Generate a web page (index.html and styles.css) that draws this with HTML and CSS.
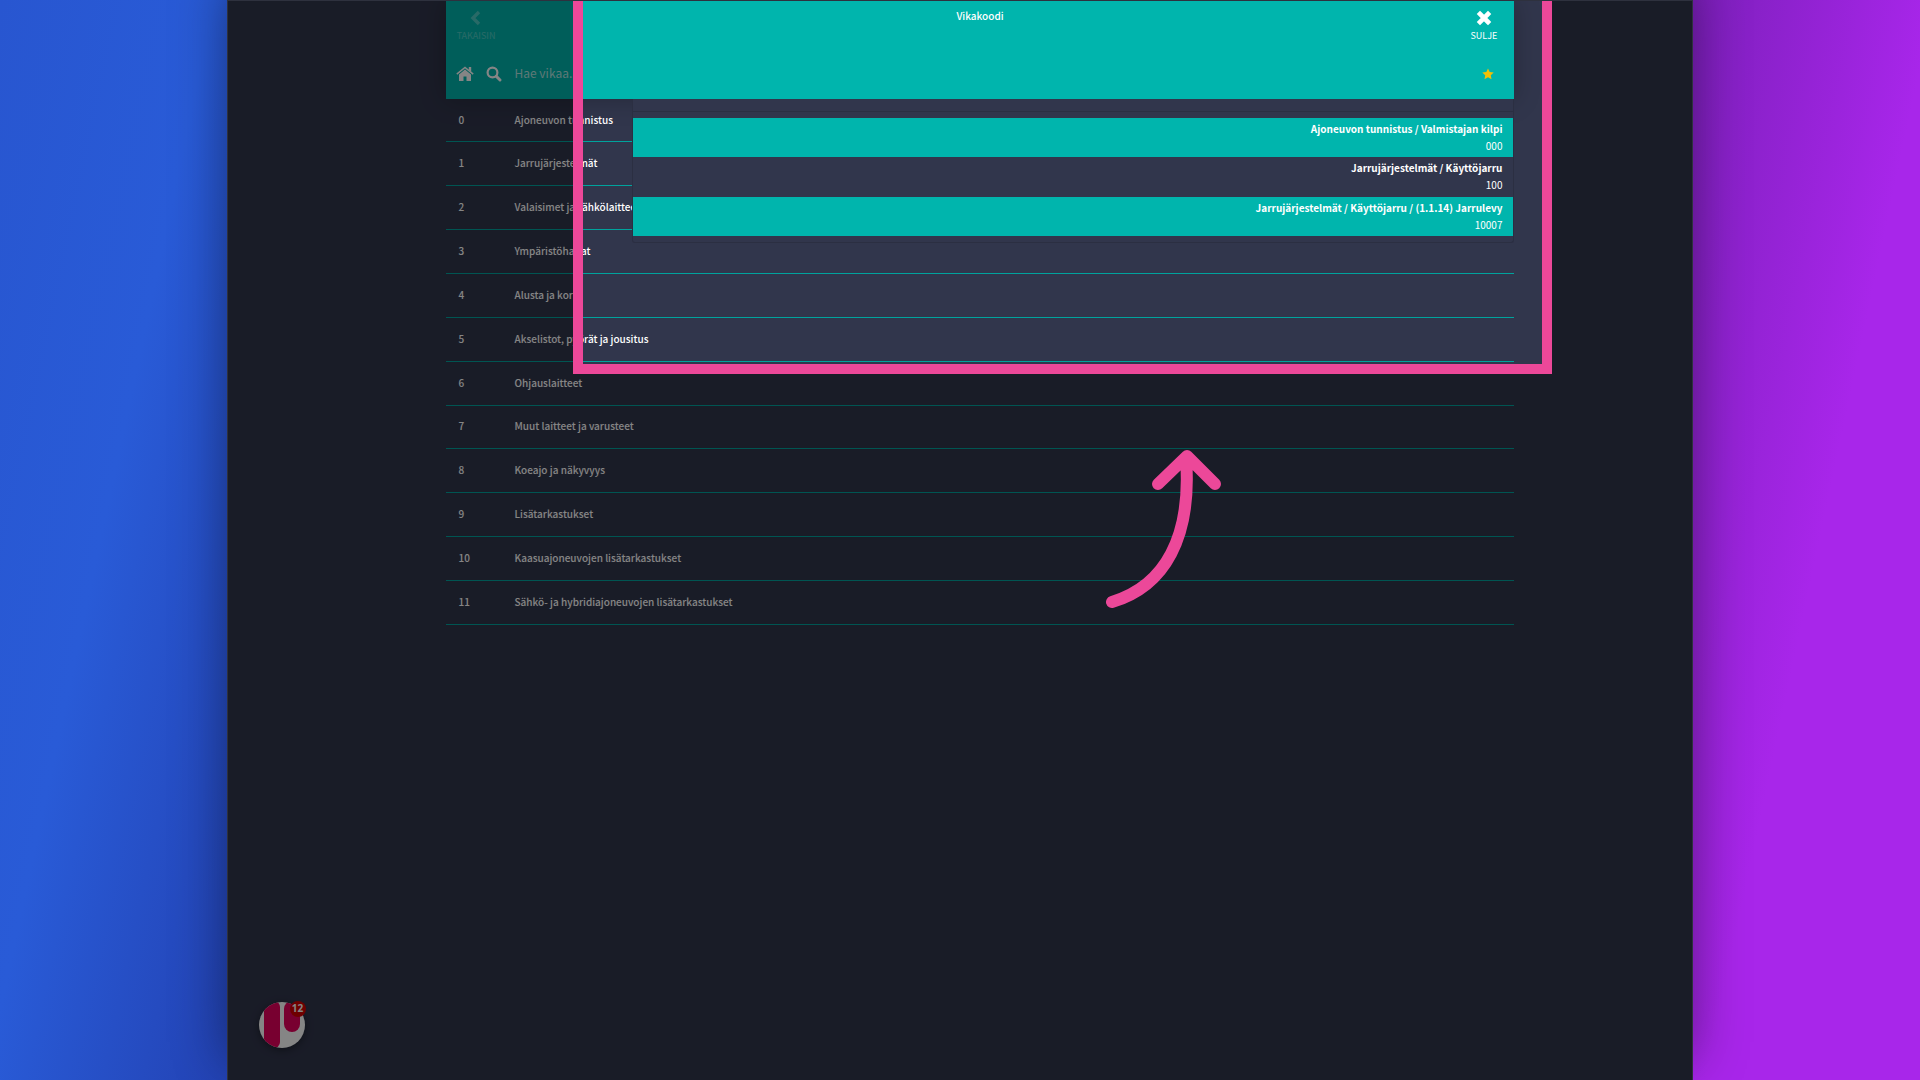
FILE: index.html
```html
<!DOCTYPE html>
<html lang="fi">
<head>
<meta charset="utf-8">
<meta name="viewport" content="width=device-width, initial-scale=1">
<title>Vikakoodi</title>
<link rel="stylesheet" href="styles.css">
</head>
<body>
<main class="window">
  <section class="panel">
    <header class="header">
      <div class="titlebar">
        <button class="nav-button back" type="button" disabled>
          <svg class="nav-icon" viewBox="0 0 16 16" aria-hidden="true"><path d="M11 2L5 8l6 6" fill="none" stroke="currentColor" stroke-width="3.4"/></svg>
          <span>TAKAISIN</span>
        </button>
        <h1 class="title">Vikakoodi</h1>
        <button class="nav-button close" type="button">
          <svg class="nav-icon" viewBox="0 0 16 16" aria-hidden="true"><path d="M4 4l8 8M12 4l-8 8" fill="none" stroke="currentColor" stroke-width="4.6" stroke-linecap="square" stroke-linejoin="round"/></svg>
          <span>SULJE</span>
        </button>
      </div>
      <div class="searchbar">
        <button class="icon-button" type="button" aria-label="Koti">
          <svg class="home-icon" viewBox="0 0 18 16" aria-hidden="true"><path d="M9 3.6l6 5V15h-4.500v-4.500h-3V15H3V8.600z" fill="currentColor"/><path d="M.8 8.200L9 1.400l8.200 6.800" fill="none" stroke="currentColor" stroke-width="1.500"/><path d="M12.800 1h2.400v5l-2.400-2z" fill="currentColor"/></svg>
        </button>
        <label class="search-label" for="search" aria-label="Hae">
          <svg class="search-icon" viewBox="0 0 16 16" aria-hidden="true"><circle cx="6.500" cy="6.500" r="4.900" fill="none" stroke="currentColor" stroke-width="2.200"/><path d="M10.400 10.400l3.600 3.600" stroke="currentColor" stroke-width="2.900" stroke-linecap="round"/></svg>
        </label>
        <input class="search-input" id="search" type="text" placeholder="Hae vikaa...">
        <button class="icon-button star" type="button" aria-label="Suosikit">
          <svg class="star-icon" viewBox="0 0 12 12" aria-hidden="true"><path d="M6 .4l1.700 3.600 4 .5-2.900 2.700.7 4L6 9.300l-3.500 1.900.7-4L.3 4.500l4-.5z" fill="currentColor"/></svg>
        </button>
      </div>
    </header>
    <table class="codes">
      <tbody>
        <tr><td class="code">0</td><td>Ajoneuvon tunnistus</td></tr>
        <tr><td class="code">1</td><td>Jarrujärjestelmät</td></tr>
        <tr><td class="code">2</td><td>Valaisimet ja sähkölaitteet</td></tr>
        <tr><td class="code">3</td><td>Ympäristöhaitat</td></tr>
        <tr><td class="code">4</td><td>Alusta ja kori</td></tr>
        <tr><td class="code">5</td><td>Akselistot, pyörät ja jousitus</td></tr>
        <tr><td class="code">6</td><td>Ohjauslaitteet</td></tr>
        <tr><td class="code">7</td><td>Muut laitteet ja varusteet</td></tr>
        <tr><td class="code">8</td><td>Koeajo ja näkyvyys</td></tr>
        <tr><td class="code">9</td><td>Lisätarkastukset</td></tr>
        <tr><td class="code">10</td><td>Kaasuajoneuvojen lisätarkastukset</td></tr>
        <tr><td class="code">11</td><td>Sähkö- ja hybridiajoneuvojen lisätarkastukset</td></tr>
      </tbody>
    </table>
    <ul class="favorites">
      <li class="favorite marked"><strong>Ajoneuvon tunnistus / Valmistajan kilpi</strong><span>000</span></li>
      <li class="favorite"><strong>Jarrujärjestelmät / Käyttöjarru</strong><span>100</span></li>
      <li class="favorite marked"><strong>Jarrujärjestelmät / Käyttöjarru / (1.1.14) Jarrulevy</strong><span>10007</span></li>
    </ul>
  </section>
  <button class="chat" type="button" aria-label="Viestit">
    <svg class="chat-logo" viewBox="0 0 46 46" aria-hidden="true">
      <clipPath id="disc"><circle cx="23" cy="23" r="23"/></clipPath>
      <g clip-path="url(#disc)"><path fill="#fff" d="M0 0h46v46H0z"/><rect x="5" y="-1" width="16" height="47" rx="6" fill="#e6005c"/><rect x="25" y="-1" width="16" height="31" rx="8" fill="#e6005c"/></g>
    </svg>
    <span class="badge">12</span>
  </button>
  <div class="spotlight"></div>
  <svg class="arrow" viewBox="0 0 104 160" aria-hidden="true"><path d="M7 153C60 137 87 88 81 9M53 35L82 7l28 28" fill="none" stroke="#ec4899" stroke-width="12" stroke-linecap="round" stroke-linejoin="round"/></svg>
</main>
</body>
</html>
```
FILE: styles.css
```css
* { box-sizing: border-box; }

html { overflow-x: clip; }

body {
  margin: 0;
  min-height: 100vh;
  background: linear-gradient(102deg, #2856d0 0%, #295bd7 10%, #1e2f98 30%, #5b1a98 70%, #a826ea 90%);
  color: #fff;
  font: 10px/16px "Noto Sans CJK SC", "Noto Sans", sans-serif;
}

/* soft shade behind the window */
body::before {
  content: "";
  position: absolute;
  inset: 0 11.8%;
  box-shadow: 0 -20px 50px rgba(0, 0, 0, .4);
}

button {
  padding: 0;
  border: 0;
  background: none;
  color: inherit;
  font: inherit;
}

/* application window */
.window {
  position: relative;
  display: grid;
  grid-template-columns: 218fr 1069fr 178fr;
  align-items: start;
  width: 76.4%;
  min-height: 100vh;
  margin: 0 auto;
  overflow: clip;
  background: #31364c;
  border: 1px solid #2e313e;
  border-bottom: 0;
}

.panel {
  position: relative;
  grid-column: 2;
}

/* header */
.header {
  position: relative;
  background: #00b5ad;
  box-shadow: 0 0 24px rgba(0, 0, 0, .25);
}

.titlebar {
  display: grid;
  grid-template-columns: 61px 1fr 61px;
  align-items: start;
  height: 48px;
}

.title {
  margin: 0;
  padding-top: 7px;
  font-size: 10px;
  font-weight: 500;
  text-align: center;
}

.nav-button {
  display: flex;
  flex-direction: column;
  align-items: center;
  padding-top: 9px;
  font-size: 9px;
  line-height: 20px;
}

.nav-button.back { opacity: .3; }

.nav-icon { width: 16px; height: 16px; }

.searchbar {
  display: flex;
  align-items: center;
  height: 50px;
  padding: 0 20px 0 10px;
}

.icon-button, .search-label { display: flex; }
.home-icon { width: 18px; height: 16px; }
.search-label { margin-left: 12px; }
.search-icon { width: 16px; height: 16px; }

.search-input {
  flex: 1;
  min-width: 0;
  height: 32px;
  margin-left: 13px;
  padding: 0 0 3px;
  border: 0;
  background: none;
  color: #fff;
  font: inherit;
  font-size: 12px;
}

.search-input::placeholder { color: #b5e6e3; opacity: 1; }
.star { color: #f2c005; }
.star-icon { width: 12px; height: 12px; }

/* fault groups */
.codes {
  width: 100%;
  height: 526px;
  border-collapse: collapse;
  font-weight: 500;
}

.codes td {
  padding: 0 0 1px;
  border-bottom: 1px solid #00a39d;
}

.codes .code {
  width: 69px;
  padding-left: 13px;
}

/* favourites dropdown */
.favorites {
  position: absolute;
  top: 98px;
  right: 0;
  display: flex;
  flex-direction: column;
  width: 882px;
  height: 144px;
  margin: 0;
  padding: 0 0 6px;
  border: 1px solid #2b2f42;
  border-top: 0;
  border-radius: 0 0 3px 3px;
  background: #31364c;
  list-style: none;
}

.favorites::before {
  content: "";
  height: 12px;
  margin-bottom: 6px;
  border-bottom: 1px solid #2b2f42;
}

.favorite {
  display: flex;
  flex: 1;
  flex-direction: column;
  align-items: flex-end;
  padding: 2px 11px;
  line-height: 17px;
}

.favorite.marked { background: #00b5ad; }

/* support chat */
.chat {
  position: absolute;
  bottom: 32px;
  left: 31px;
  width: 46px;
  height: 46px;
  border-radius: 50%;
  box-shadow: 0 2px 8px rgba(0, 0, 0, .4);
}

.chat-logo { display: block; width: 46px; height: 46px; }

.badge {
  position: absolute;
  top: -1px;
  right: -1px;
  width: 16px;
  height: 16px;
  border-radius: 50%;
  background: #d40000;
  font: 700 10px/15px "Open Sans", sans-serif;
}

/* spotlight over the favourites */
.spotlight {
  position: absolute;
  top: -13px;
  right: 140px;
  width: 979px;
  height: 386px;
  border: 10px solid #ec4899;
  box-shadow: 0 0 0 2000px rgba(0, 0, 0, .48);
  pointer-events: none;
}

.arrow {
  position: absolute;
  top: 448px;
  right: 483px;
  width: 104px;
  height: 160px;
  overflow: visible;
}
```
